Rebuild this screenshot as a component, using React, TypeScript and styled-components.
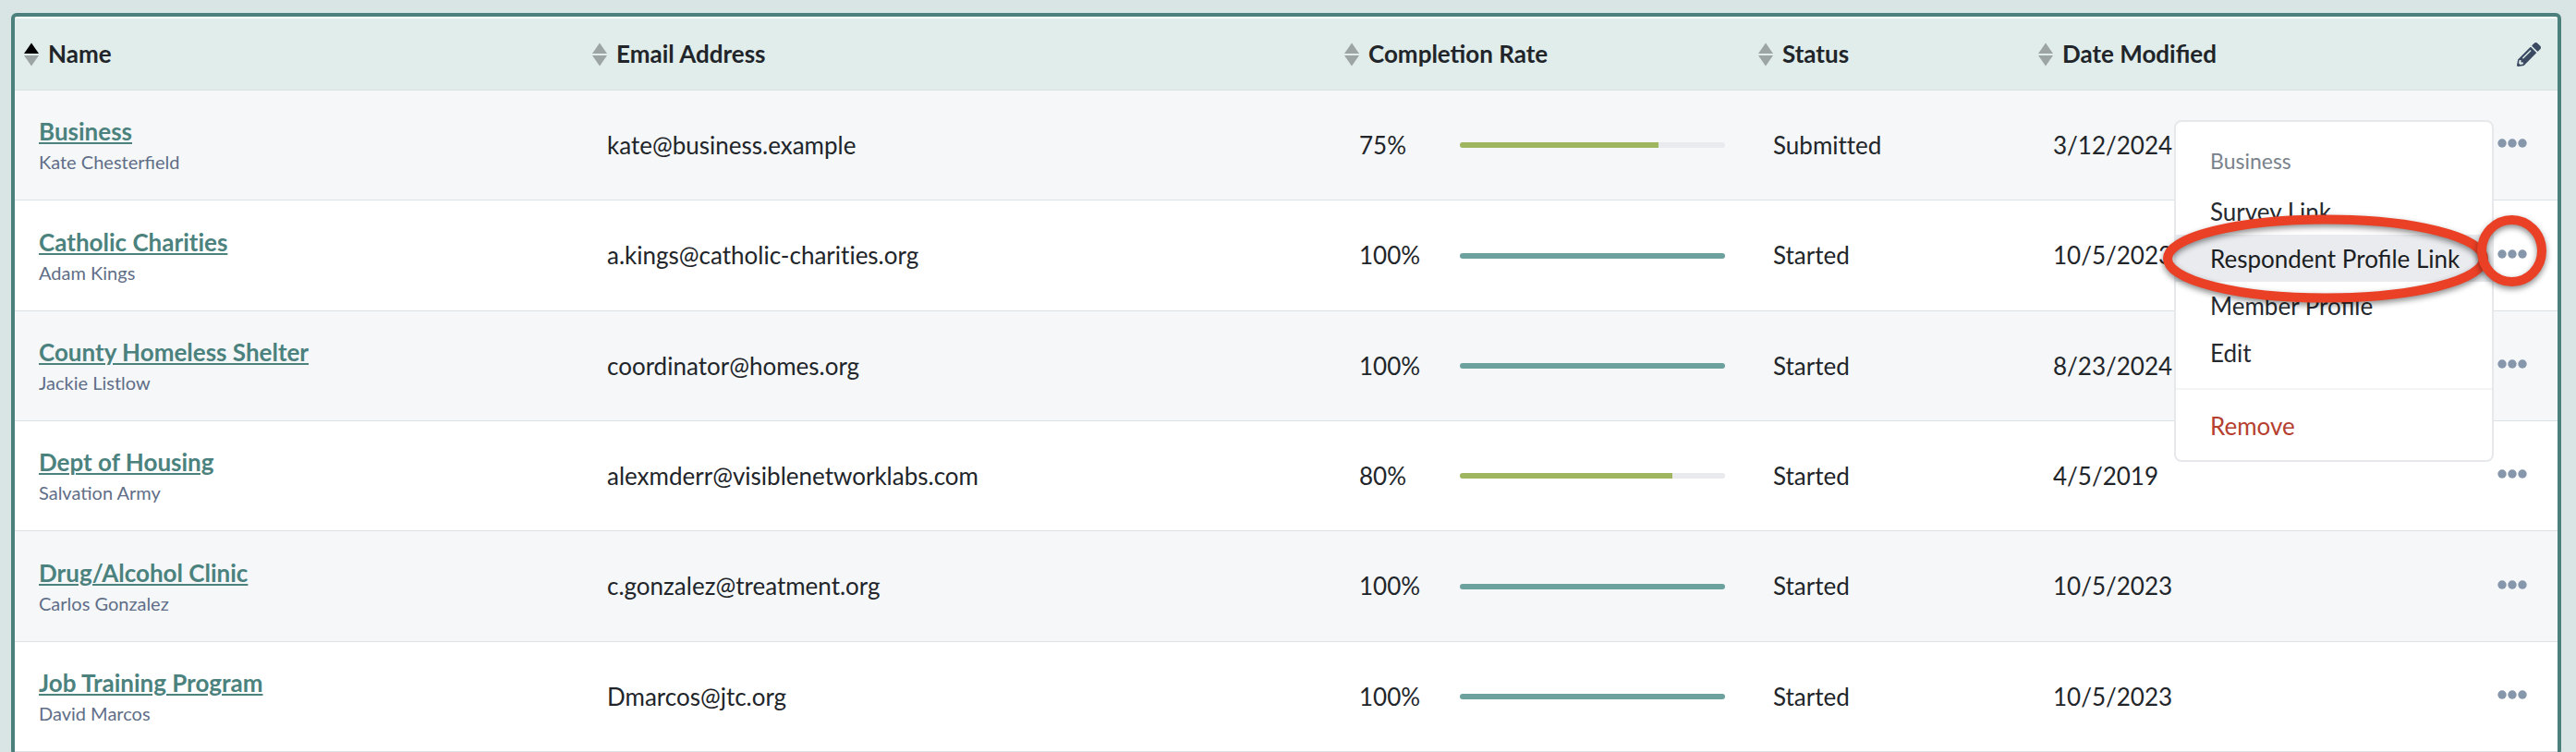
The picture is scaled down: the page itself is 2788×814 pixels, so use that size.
import React from 'react';
import styled, { createGlobalStyle } from 'styled-components';
import { FaPencilAlt } from 'react-icons/fa';

const GlobalStyle = createGlobalStyle`
  *, *::before, *::after { box-sizing: border-box; }
  html, body { margin: 0; }
  body {
    background: #d9e5e4;
    color: #212529;
    font-family: Lato, "Liberation Sans", sans-serif;
    font-size: 26px;
    line-height: 39px;
  }
  button { font: inherit; color: inherit; background: none; border: 0; padding: 0; cursor: pointer; }
`;

const Page = styled.main`
  height: 100vh;
  overflow: hidden;
  padding: 14px 16px 0 12px;
`;

const Frame = styled.section`
  position: relative;
  border: 4px solid #4c807d;
  border-radius: 6px;
  padding-top: 2px;
  background: #fff;
`;

const Table = styled.table`
  width: 100%;
  table-layout: fixed;
  border-collapse: separate;
  border-spacing: 0;
`;

const Column = styled.col<{ $width: number }>`
  width: ${(p) => p.$width}px;
`;

const HeaderCell = styled.th<{ $action?: boolean }>`
  padding: ${(p) => (p.$action ? '19px 18px 19px 0' : '19px 0 19px 10px')};
  background: #e0edeb;
  border-bottom: 1px solid #dce1e3;
  font-weight: 700;
  text-align: ${(p) => (p.$action ? 'right' : 'left')};
`;

const SortButton = styled.button`
  display: flex;
  align-items: center;
  gap: 10px;
  font-weight: 700;
`;

const EditColumnsButton = styled.button`
  display: block;
  margin-left: auto;
  height: 39px;
  color: #3b4a61;

  svg { display: block; width: 26px; height: 26px; }
`;

const Row = styled.tr`
  background: #fff;
  &:nth-child(odd) { background: #f5f7f9; }
  &:nth-child(3n + 2) { height: 120px; }
`;

const Cell = styled.td`
  position: relative;
  height: 119px;
  padding: 25px 26px;
  border-bottom: 1px solid #dce1e6;
  vertical-align: middle;
  white-space: nowrap;
  font-variant-ligatures: none;
`;

const OrgLink = styled.a`
  display: table;
  color: #4b827e;
  font-weight: 700;
  text-decoration: underline;
  text-decoration-thickness: 2px;
  text-underline-offset: 2px;
`;

const Contact = styled.div`
  padding-bottom: 2px;
  color: #5f6e87;
  font-size: 20px;
  line-height: 27px;
  font-variant-ligatures: normal;
`;

const Completion = styled.div`
  display: flex;
  align-items: center;
`;

const Percent = styled.span`
  flex: 0 0 109px;
`;

const Track = styled.div`
  flex: 1;
  height: 6px;
  border-radius: 3px;
  overflow: hidden;
  background: #e9eaee;
`;

const Fill = styled.div<{ $complete: boolean }>`
  height: 100%;
  background: ${(p) => (p.$complete ? '#6da19d' : '#a0b55f')};
`;

const MoreButton = styled.button`
  display: block;
  padding-bottom: 4px;

  svg { display: block; fill: #8696ab; }
`;

const Menu = styled.div`
  position: absolute;
  z-index: 1;
  top: 32px;
  right: 69px;
  width: 346px;
  padding: 12px 0;
  border: 2px solid #e6e8eb;
  border-radius: 8px;
  background: #fff;
  font-variant-ligatures: normal;
`;

const MenuTitle = styled.div`
  padding: 13px 37px 11px;
  color: #79828b;
  font-size: 23px;
  line-height: 35px;
`;

const MenuItem = styled.button<{ $active?: boolean; $danger?: boolean }>`
  display: block;
  width: 100%;
  padding: 7px 37px 5px;
  text-align: left;
  background: ${(p) => (p.$active ? '#e9ebef' : 'transparent')};
  color: ${(p) => (p.$danger ? '#b5402f' : p.$active ? '#1a1d21' : '#26292e')};
`;

const MenuDivider = styled.hr`
  height: 2px;
  margin: 13px 0;
  border: 0;
  background: #f3f4f6;
`;

const Highlight = styled.svg`
  position: absolute;
  z-index: 2;
  top: 204px;
  right: 0;
  pointer-events: none;
  overflow: visible;

  ellipse {
    fill: none;
    stroke: #ea4025;
    stroke-width: 10px;
    filter: drop-shadow(0 3px 3px rgba(0, 0, 0, 0.45));
  }
`;

const columns = [
  { label: 'Name', width: 615 },
  { label: 'Email Address', width: 814 },
  { label: 'Completion Rate', width: 448 },
  { label: 'Status', width: 303 },
  { label: 'Date Modified', width: 481 },
];

const members = [
  { name: 'Business', contact: 'Kate Chesterfield', email: 'kate@business.example', rate: 75, status: 'Submitted', date: '3/12/2024' },
  { name: 'Catholic Charities', contact: 'Adam Kings', email: 'a.kings@catholic-charities.org', rate: 100, status: 'Started', date: '10/5/2023' },
  { name: 'County Homeless Shelter', contact: 'Jackie Listlow', email: 'coordinator@homes.org', rate: 100, status: 'Started', date: '8/23/2024' },
  { name: 'Dept of Housing', contact: 'Salvation Army', email: 'alexmderr@visiblenetworklabs.com', rate: 80, status: 'Started', date: '4/5/2019' },
  { name: 'Drug/Alcohol Clinic', contact: 'Carlos Gonzalez', email: 'c.gonzalez@treatment.org', rate: 100, status: 'Started', date: '10/5/2023' },
  { name: 'Job Training Program', contact: 'David Marcos', email: 'Dmarcos@jtc.org', rate: 100, status: 'Started', date: '10/5/2023' },
];

function SortIcon({ ascending }: { ascending: boolean }) {
  return (
    <svg width="16" height="26" viewBox="0 0 16 26" aria-hidden="true">
      <path d="M8 0.5 L16 12 H0 Z" fill={ascending ? '#000' : '#9da5a4'} />
      <path d="M0 14 H16 L8 25.5 Z" fill="#9da5a4" />
    </svg>
  );
}

function ActionsMenu({ title }: { title: string }) {
  return (
    <Menu role="menu" aria-label={title}>
      <MenuTitle>{title}</MenuTitle>
      <MenuItem role="menuitem">Survey Link</MenuItem>
      <MenuItem role="menuitem" $active>Respondent Profile Link</MenuItem>
      <MenuItem role="menuitem">Member Profile</MenuItem>
      <MenuItem role="menuitem">Edit</MenuItem>
      <MenuDivider />
      <MenuItem role="menuitem" $danger>Remove</MenuItem>
    </Menu>
  );
}

export default function App() {
  return (
    <Page>
      <GlobalStyle />
      <Frame>
        <Table>
          <colgroup>
            {columns.map((c) => <Column key={c.label} $width={c.width} />)}
            <Column $width={91} />
          </colgroup>
          <thead>
            <tr>
              {columns.map((c, i) => (
                <HeaderCell key={c.label} scope="col" aria-sort={i === 0 ? 'ascending' : 'none'}>
                  <SortButton>
                    <SortIcon ascending={i === 0} />
                    {c.label}
                  </SortButton>
                </HeaderCell>
              ))}
              <HeaderCell scope="col" $action>
                <EditColumnsButton aria-label="Edit columns"><FaPencilAlt /></EditColumnsButton>
              </HeaderCell>
            </tr>
          </thead>
          <tbody>
            {members.map((m, i) => (
              <Row key={m.name}>
                <Cell>
                  <OrgLink href="#">{m.name}</OrgLink>
                  <Contact>{m.contact}</Contact>
                </Cell>
                <Cell>{m.email}</Cell>
                <Cell>
                  <Completion>
                    <Percent>{m.rate}%</Percent>
                    <Track role="progressbar" aria-label={`${m.name} completion`} aria-valuenow={m.rate}>
                      <Fill $complete={m.rate === 100} style={{ width: `${m.rate}%` }} />
                    </Track>
                  </Completion>
                </Cell>
                <Cell>{m.status}</Cell>
                <Cell>{m.date}</Cell>
                <Cell>
                  <MoreButton aria-label={`Actions for ${m.name}`}>
                    <svg width="32" height="10" viewBox="0 0 32 10">
                      <circle cx="5" cy="5" r="4.7" />
                      <circle cx="16" cy="5" r="4.7" />
                      <circle cx="27" cy="5" r="4.7" />
                    </svg>
                  </MoreButton>
                  {i === 0 && <ActionsMenu title={m.name} />}
                </Cell>
              </Row>
            ))}
          </tbody>
        </Table>
        <Highlight width="440" height="120" viewBox="0 0 440 120" aria-hidden="true">
          <ellipse cx="189" cy="58" rx="171" ry="42.5" />
          <ellipse cx="390.5" cy="49.5" rx="32.5" ry="33.5" />
        </Highlight>
      </Frame>
    </Page>
  );
}
